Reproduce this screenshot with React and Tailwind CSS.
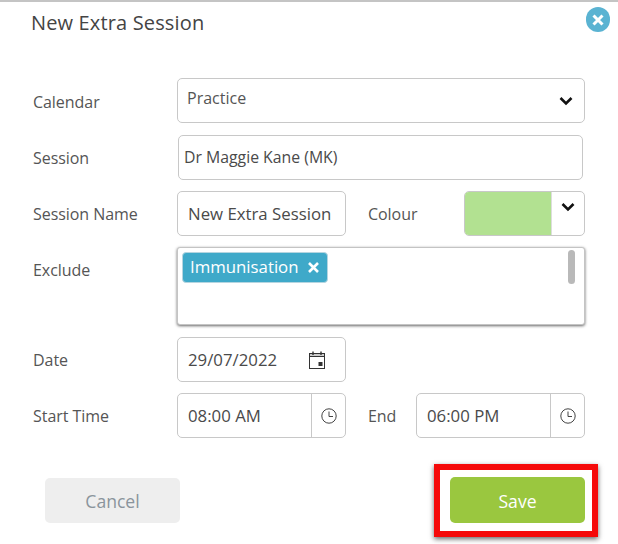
import React from "react";

const fieldBase = "h-[45px] border border-[#c8c8c8] rounded-[5px] bg-white flex items-center text-[#4a4a4a]";
const field = `${fieldBase} text-[16.8px]`;

function Chevron({ className }) {
  return (
    <svg width="14" height="10" viewBox="0 0 14 10" className={className}>
      <path d="M1.5 2 L7 7.5 L12.5 2" fill="none" stroke="#111" strokeWidth="2.6" />
    </svg>
  );
}

function Clock() {
  return (
    <svg width="16" height="16" viewBox="0 0 16 16">
      <circle cx="8" cy="8" r="7.2" fill="none" stroke="#444" strokeWidth="1" />
      <path d="M8 3.5 V8.5 H12" fill="none" stroke="#444" strokeWidth="1" />
    </svg>
  );
}

function CalendarIcon() {
  return (
    <svg width="16" height="18" viewBox="0 0 16 18">
      <rect x="0.5" y="2.5" width="15" height="15" fill="none" stroke="#333" strokeWidth="1" />
      <rect x="0.5" y="2.5" width="15" height="3" fill="#333" opacity="0.25" />
      <path d="M4 0.5 V4 M12 0.5 V4" stroke="#333" strokeWidth="1.4" />
      <path d="M0.5 5.5 H15.5" stroke="#333" strokeWidth="1" />
      <rect x="9.5" y="11" width="4" height="4" fill="#333" />
    </svg>
  );
}

function Label({ children, className = "" }) {
  return <div className={`text-[16px] tracking-[-0.05px] text-[#555] ${className}`}>{children}</div>;
}

export default function App() {
  return (
    <div className="relative w-[618px] h-[544px] bg-white overflow-hidden border-t-2 border-[#c4c4c4] [font-family:'Open_Sans',sans-serif]">
      <div className="flex justify-between h-[76px]">
        <div className="ml-[31px] mt-[7px] text-[20px] leading-[28px] text-[#444] tracking-[0.15px]">New Extra Session</div>
        <div className="mt-[5px] mr-[8px] w-[24px] h-[25px] rounded-full bg-[#5ab3d2] flex items-center justify-center">
          <svg width="14" height="14" viewBox="0 0 14 14">
            <path d="M2.5 2.5 L11.5 11.5 M11.5 2.5 L2.5 11.5" stroke="#fff" strokeWidth="3" />
          </svg>
        </div>
      </div>

      <div className="flex items-center">
        <Label className="ml-[33px] w-[144px] mt-[3px]">Calendar</Label>
        <div className={`${field} w-[408px] justify-between pl-[9px] pr-[11px]`}>
          <span className="-mt-[6px] text-[#555] text-[16px]">Practice</span>
          <Chevron />
        </div>
      </div>

      <div className="flex items-center mt-[12px]">
        <Label className="ml-[33px] w-[145px]">Session</Label>
        <div className={`${fieldBase} w-[405px] pl-[5px] text-[15.8px]`}>Dr Maggie Kane (MK)</div>
      </div>

      <div className="flex items-center mt-[11px]">
        <Label className="ml-[33px] w-[144px]">Session Name</Label>
        <div className={`${field} w-[169px] pl-[10px] whitespace-nowrap`}>New Extra Session</div>
        <Label className="ml-[22px] w-[96px]">Colour</Label>
        <div className={`${field} w-[121px] overflow-hidden`}>
          <div className="w-[86px] h-full bg-[#b2e191] shrink-0" />
          <div className="flex-1 h-full border-l border-[#ddd] flex justify-center pt-[10px]">
            <Chevron />
          </div>
        </div>
      </div>

      <div className="flex mt-[11px]">
        <Label className="ml-[33px] w-[144px] mt-[11px]">Exclude</Label>
        <div className="relative w-[408px] h-[78px] border border-[#c4c4c4] rounded-[3px] bg-white shadow-[0_1px_3px_rgba(0,0,0,0.6)] p-[4px]">
          <div className="inline-flex items-center h-[31px] w-[146px] rounded-[4px] bg-[#3fa9c9] border border-[#b5d5e0] pl-[7px] text-white gap-[8px]">
            <span className="-mt-[1px] text-[16.8px] whitespace-nowrap">Immunisation</span>
            <svg width="13" height="13" viewBox="0 0 13 13">
              <path d="M2 2 L11 11 M11 2 L2 11" stroke="#fff" strokeWidth="2.6" />
            </svg>
          </div>
          <div className="absolute right-[9px] top-[2px] w-[7px] h-[34px] rounded-full bg-[#b9b9b9]" />
        </div>
      </div>

      <div className="flex items-center mt-[12px]">
        <Label className="ml-[33px] w-[144px]">Date</Label>
        <div className={`${field} w-[169px] pl-[10px] pr-[20px] justify-between`}>
          <span>29/07/2022</span>
          <CalendarIcon />
        </div>
      </div>

      <div className="flex items-center mt-[11px]">
        <Label className="ml-[33px] w-[144px]">Start Time</Label>
        <div className={`${field} w-[169px] pl-[10px]`}>
          <span className="flex-1">08:00 AM</span>
          <div className="w-[34px] h-full border-l border-[#c8c8c8] flex items-center justify-center"><Clock /></div>
        </div>
        <Label className="ml-[22px] w-[48px]">End</Label>
        <div className={`${field} w-[169px] pl-[10px]`}>
          <span className="flex-1">06:00 PM</span>
          <div className="w-[34px] h-full border-l border-[#c8c8c8] flex items-center justify-center"><Clock /></div>
        </div>
      </div>

      <div className="flex items-center justify-between mt-[39px] ml-[45px] w-[540px]">
        <div className="w-[135px] h-[45px] rounded-[5px] bg-[#eeeeee] text-[#8a949c] text-[17.6px] flex items-center justify-center pt-[2px]">Cancel</div>
        <div className="relative w-[135px] h-[46px] rounded-[5px] bg-[#9ac73f] text-white text-[17.6px] flex items-center justify-center pt-[2px]">
          Save
          <div className="absolute -left-[16px] -top-[13px] -right-[13px] -bottom-[14px] border-[6px] border-[#f50a0a] shadow-[0_2px_5px_rgba(0,0,0,0.6)]" />
        </div>
      </div>
    </div>
  );
}
